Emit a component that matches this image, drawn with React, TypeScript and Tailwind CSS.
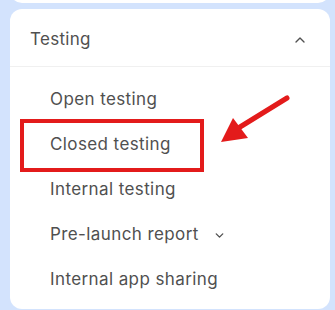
import { ChevronUp, ChevronDown } from 'lucide-react';

const items = ['Open testing', 'Closed testing', 'Internal testing', 'Pre-launch report', 'Internal app sharing'];

export default function App() {
  return (
    <div className="w-[335px] h-[310px] overflow-hidden bg-[#d3e3fd] pl-[10px] pr-[5px] font-['Inter',sans-serif] text-[#505050]">
      <div className="h-[20px] -mt-[17px] rounded-b-[12px] bg-white" />
      <div className="mt-[6px] h-[300px] rounded-[12px] bg-white relative">
        <div className="flex items-center justify-between h-[58px] pt-[4px] pl-[20px] pr-[22px] border-b border-[#f0f0f0]">
          <span className="text-[17px] tracking-[0.3px]">Testing</span>
          <ChevronUp size={16} strokeWidth={2} />
        </div>
        <div className="pl-[40px] pt-[10px]">
          {items.map((t, i) => (
            <div key={t} className="h-[45px] flex items-center text-[17px] tracking-[0.4px]">
              <span>{t}</span>
              {i === 3 && <ChevronDown size={13} strokeWidth={2.5} className="ml-[14px] mt-[1px]" />}
            </div>
          ))}
        </div>
        <div className="absolute left-[10px] top-[110px] w-[184px] h-[53px] border-4 border-[#e31b1b]" />
        <svg className="absolute left-0 top-0" width="320" height="300" viewBox="10 9 320 300">
          <line x1="287" y1="98" x2="240" y2="127" stroke="#e31b1b" strokeWidth="5" strokeLinecap="round" />
          <polygon points="221,142 233,118 248,138" fill="#e31b1b" />
        </svg>
      </div>
    </div>
  );
}
